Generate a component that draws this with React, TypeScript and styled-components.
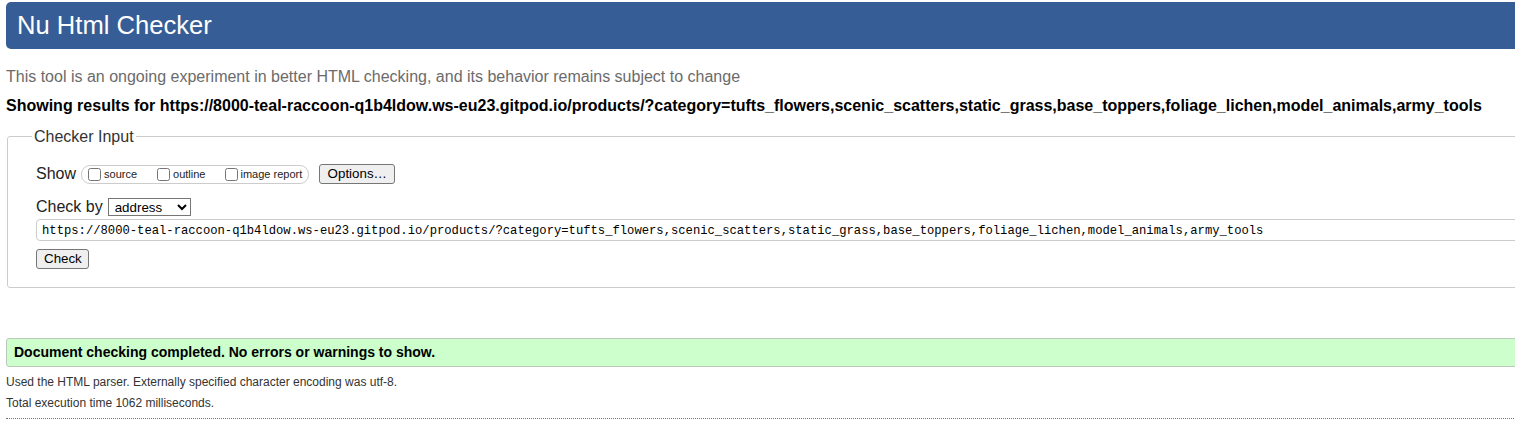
import React from 'react';
import styled, { createGlobalStyle } from 'styled-components';

const GlobalStyle = createGlobalStyle`
  html, body {
    margin: 0;
    padding: 0;
    overflow: hidden;
    background: #ffffff;
  }
  body {
    font-family: "Liberation Sans", Arial, sans-serif;
    color: #222;
  }
`;

const TARGET_URL =
  'https://8000-teal-raccoon-q1b4ldow.ws-eu23.gitpod.io/products/?category=tufts_flowers,scenic_scatters,static_grass,base_toppers,foliage_lichen,model_animals,army_tools';

const Page = styled.div`
  width: 1560px;
  padding-left: 6px;
  box-sizing: border-box;
`;

const Header = styled.h1`
  margin: 2px 0 0;
  height: 47px;
  padding-left: 11px;
  background: #365d95;
  color: #ffffff;
  border-radius: 5px;
  font-size: 25.6px;
  font-weight: normal;
  line-height: 47px;
`;

const Intro = styled.p`
  margin: 18.5px 0 0;
  font-size: 16px;
  line-height: 18px;
  color: #6b6b6b;
`;

const ResultsFor = styled.p`
  margin: 11px 0 0;
  font-size: 16px;
  line-height: 18px;
  font-weight: bold;
  color: #000;
  white-space: nowrap;
`;

const InputFieldset = styled.fieldset`
  margin: 13px 0 0 1px;
  padding: 0 0 18px 28px;
  border: 1px solid #cccccc;
  border-radius: 3px;
  min-width: 0;
`;

const Legend = styled.legend`
  margin-left: -4px;
  padding: 0 2px;
  font-size: 16px;
  line-height: 18px;
  color: #333;
`;

const Row = styled.div<{ $top: number; $height: number }>`
  display: flex;
  align-items: center;
  margin-top: ${({ $top }) => $top}px;
  height: ${({ $height }) => $height}px;
`;

const RowLabel = styled.span`
  font-size: 16px;
  line-height: 18px;
  color: #222;
  margin-right: 5px;
`;

const OptionPill = styled.div`
  display: flex;
  align-items: center;
  height: 19px;
  box-sizing: border-box;
  padding-left: 2px;
  border: 1px solid #cccccc;
  border-radius: 9px;
`;

const CheckLabel = styled.label<{ $last?: boolean }>`
  display: flex;
  align-items: center;
  font-size: 11px;
  color: #222;
  margin-right: ${({ $last }) => ($last ? 6 : 16)}px;

  input {
    width: 13px;
    height: 13px;
    margin: 0 ${({ $last }) => ($last ? 2 : 3)}px 0 4px;
  }
`;

const PlainButton = styled.button`
  height: 20px;
  box-sizing: border-box;
  padding: 0 7px;
  border: 1px solid #767676;
  border-radius: 3px;
  background: #efefef;
  color: #000;
  font-family: "Liberation Sans", Arial, sans-serif;
  font-size: 13.33px;
  line-height: 18px;
`;

const OptionsButton = styled(PlainButton)`
  margin-left: 10px;
  width: 76px;
`;

const ModeSelect = styled.select`
  width: 83px;
  height: 18px;
  box-sizing: border-box;
  padding: 0 0 0 2px;
  border: 1px solid #767676;
  border-radius: 0;
  background: #fff;
  color: #000;
  font-family: "Liberation Sans", Arial, sans-serif;
  font-size: 13.33px;
`;

const UrlInput = styled.input`
  display: block;
  width: 100%;
  height: 22px;
  box-sizing: border-box;
  margin-top: 3px;
  padding: 1px 0 0 5px;
  border: 1px solid #cccccc;
  border-radius: 4px;
  font-family: "Liberation Mono", "DejaVu Sans Mono", monospace;
  font-size: 12.2px;
  color: #000;
`;

const CheckButton = styled(PlainButton)`
  display: block;
  margin-top: 8px;
  width: 53px;
`;

const SuccessBar = styled.p`
  margin: 50px 0 0;
  height: 29px;
  box-sizing: border-box;
  padding-left: 7px;
  border: 1px solid #bcc8bc;
  border-radius: 3px;
  background: #ccffcc;
  color: #000;
  font-size: 14px;
  font-weight: bold;
  line-height: 27px;
`;

const Detail = styled.p<{ $top: number }>`
  margin: ${({ $top }) => $top}px 0 0;
  font-size: 12px;
  line-height: 14px;
  color: #333;
`;

const DottedRule = styled.hr`
  margin: 8px 0 0;
  border: none;
  border-top: 1px dotted #777;
  height: 0;
`;

const App: React.FC = () => {
  return (
    <Page>
      <GlobalStyle />
      <Header>Nu Html Checker</Header>
      <Intro>
        This tool is an ongoing experiment in better HTML checking, and its behavior remains subject to change
      </Intro>
      <ResultsFor>Showing results for {TARGET_URL}</ResultsFor>

      <InputFieldset>
        <Legend>Checker Input</Legend>
        <Row $top={18.5} $height={20}>
          <RowLabel>Show</RowLabel>
          <OptionPill>
            <CheckLabel>
              <input type="checkbox" />
              source
            </CheckLabel>
            <CheckLabel>
              <input type="checkbox" />
              outline
            </CheckLabel>
            <CheckLabel $last>
              <input type="checkbox" />
              image report
            </CheckLabel>
          </OptionPill>
          <OptionsButton type="button">Options…</OptionsButton>
        </Row>
        <Row $top={14} $height={18}>
          <RowLabel>Check by</RowLabel>
          <ModeSelect defaultValue="address">
            <option value="address">address</option>
            <option value="file">file upload</option>
            <option value="textarea">text input</option>
          </ModeSelect>
        </Row>
        <UrlInput type="url" defaultValue={TARGET_URL} />
        <CheckButton type="button">Check</CheckButton>
      </InputFieldset>

      <SuccessBar>Document checking completed. No errors or warnings to show.</SuccessBar>
      <Detail $top={8}>Used the HTML parser. Externally specified character encoding was utf-8.</Detail>
      <Detail $top={7}>Total execution time 1062 milliseconds.</Detail>
      <DottedRule />
    </Page>
  );
};

export default App;
